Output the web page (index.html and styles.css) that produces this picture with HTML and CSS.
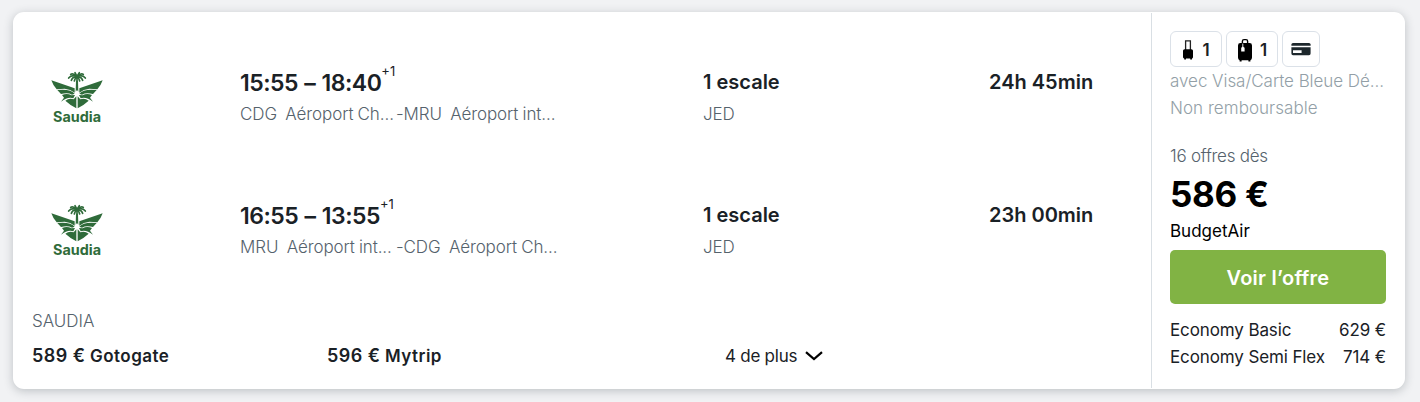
FILE: index.html
```html
<!DOCTYPE html>
<html lang="fr">

<head>
  <meta charset="UTF-8">
  <meta name="viewport" content="width=device-width, initial-scale=1.0">
  <title>Vols Paris - Maurice</title>
  <link rel="stylesheet" href="styles.css">
</head>

<body>
  <!-- Airline emblem, shared by both legs -->
  <svg class="defs" width="0" height="0">
    <symbol id="saudia" viewBox="0 0 225 225">
      <path d="M111 49L105 38M111 49L118 38M111 49Q99 38 92 43M111 49Q123 38 130 43M111 49Q94 43 86 54M111 49Q128 43 136 54M111 50Q99 49 94 61M111 50Q123 49 128 61M111 50Q105 54 103 63M111 50Q117 54 119 63M111 50V64" fill="none" stroke="#2f6b3a" stroke-width="5" stroke-linecap="round" />
      <g fill="#2f6b3a">
        <path d="M108 62H114L115 95L111 90L107 95Z" />
        <path d="M34 61L104 85V98Q92 88 74 86L50 88Q39 76 34 61Z" />
        <path d="M188 61L118 85V98Q130 88 148 86L172 88Q183 76 188 61Z" />
        <path d="M52 90Q92 86 104 101L96 104Q84 97 63 102Z" />
        <path d="M170 90Q130 86 118 101L126 104Q138 97 159 102Z" />
        <path d="M66 105Q82 99 94 106L105 105L100 115Q84 109 63 125L72 113Z" />
        <path d="M156 105Q140 99 128 106L117 105L122 115Q138 109 159 125L150 113Z" />
        <path d="M76 122Q88 113 101 118L109 109V145Q90 135 76 122Z" />
        <path d="M146 122Q134 113 121 118L113 109V145Q132 135 146 122Z" />
      </g>
    </symbol>
  </svg>

  <div class="card">
    <div class="flights">
      <div class="leg">
        <svg class="logo" viewBox="0 0 75 75">
          <use href="#saudia" width="75" height="75" />
          <text class="logo-text" x="13" y="62.4" textLength="48" lengthAdjust="spacingAndGlyphs">Saudia</text>
        </svg>
        <div class="times">
          <div class="hours"><span>15:55 – 18:40</span><sup>+1</sup></div>
          <div class="airports"><span class="from">CDG&nbsp; Aéroport Ch...</span><span>-MRU&nbsp; Aéroport int...</span></div>
        </div>
        <div class="stops">
          <div class="strong">1 escale</div>
          <div class="airports">JED</div>
        </div>
        <div class="strong duration">24h 45min</div>
      </div>

      <div class="leg">
        <svg class="logo" viewBox="0 0 75 75">
          <use href="#saudia" width="75" height="75" />
          <text class="logo-text" x="13" y="62.4" textLength="48" lengthAdjust="spacingAndGlyphs">Saudia</text>
        </svg>
        <div class="times">
          <div class="hours"><span>16:55 – 13:55</span><sup>+1</sup></div>
          <div class="airports"><span class="from">MRU&nbsp; Aéroport int...</span><span>-CDG&nbsp; Aéroport Ch...</span></div>
        </div>
        <div class="stops">
          <div class="strong">1 escale</div>
          <div class="airports">JED</div>
        </div>
        <div class="strong duration">23h 00min</div>
      </div>

      <div class="airline">SAUDIA</div>
      <div class="other-offers">
        <div class="offer"><span class="amount">589 €</span> Gotogate</div>
        <div class="offer"><span class="amount">596 €</span> Mytrip</div>
        <div class="more">
          <span>4 de plus</span>
          <svg width="18" height="10" viewBox="0 0 18 10"><path d="M1 1.2L9 8L17 1.2" fill="none" stroke="#000" stroke-width="2.2" /></svg>
        </div>
      </div>
    </div>

    <div class="price-panel">
      <div class="badges">
        <div class="badge">
          <svg width="12" height="22" viewBox="0 0 12 22">
            <path d="M3.6 11V1.8H8.4V11" fill="none" stroke="#222" stroke-width="1.3" />
            <path d="M2.6 10.3H9.4Q11 10.3 11 11.8V18Q11 19.2 10 19.4V20.6H8.2V19.6H4V20.6H2.2V19.4Q1 19.2 1 18V11.8Q1 10.3 2.6 10.3Z" />
          </svg>
          <span>1</span>
        </div>
        <div class="badge big">
          <svg width="16" height="24" viewBox="0 0 16 24">
            <path d="M5.4 6V3.2Q5.4 1.6 7 1.6H9Q10.6 1.6 10.6 3.2V6" fill="none" stroke="#000" stroke-width="1.4" />
            <path d="M3.4 5H12.6Q15 5 15 7.4V19.6Q15 22 13.4 22.2V23.4H11.4V22.3H4.6V23.4H2.6V22.2Q1 22 1 19.6V7.4Q1 5 3.4 5Z" />
            <path d="M5.8 5.6V9" stroke="#fff" stroke-width="0.9" />
            <path d="M4.2 9.8L5.8 8.4L7.6 9.8V13.6H4.2Z" fill="#fff" />
          </svg>
          <span>1</span>
        </div>
        <div class="badge card-badge">
          <svg width="20" height="13" viewBox="0 0 20 13">
            <path fill="#1d272c" d="M2 0H18Q19.6 0 19.6 1.6V2.8H0.4V1.6Q0.4 0 2 0Z" />
            <path fill="#1d272c" fill-rule="evenodd" d="M0.4 4.2H19.6V10.6Q19.6 12.3 18 12.3H2Q0.4 12.3 0.4 10.6ZM2 7.2V10H10.6V7.2Z" />
          </svg>
        </div>
      </div>
      <div class="notes">
        <div class="note visa">avec Visa/Carte Bleue Dé...</div>
        <div class="note">Non remboursable</div>
      </div>

      <div class="count">16 offres dès</div>
      <div class="price">586 €</div>
      <div class="provider">BudgetAir</div>
      <button class="cta">Voir l’offre</button>

      <div class="fare"><span>Economy Basic</span><span>629 €</span></div>
      <div class="fare"><span>Economy Semi Flex</span><span>714 €</span></div>
    </div>
  </div>
</body>

</html>
```
FILE: styles.css
```css
* {
  box-sizing: border-box;
}

body {
  margin: 0;
  padding: 12px 15px 13px 13px;
  height: 402px;
  overflow: hidden;
  background-color: #f1f2f4;
  font-family: Inter, "Liberation Sans", sans-serif;
  font-size: 17px;
  color: #1a2126;
}

.defs {
  display: block;
}

/* Result card */
.card {
  display: flex;
  height: 377px;
  background-color: #fff;
  border-radius: 11px;
  box-shadow: 0 2px 10px rgba(37, 46, 55, 0.25);
}

.flights {
  width: 1138px;
  padding: 48px 0 0 19px;
}

/* One leg of the trip */
.leg {
  display: grid;
  grid-template-columns: 200px 463px 286px 1fr;
  height: 133px;
  margin-left: 8px;
}

.logo {
  width: 75px;
  height: 75px;
}

.logo-text {
  font-family: Inter, sans-serif;
  font-size: 14px;
  font-weight: 700;
  fill: #2f6b3a;
}

.hours {
  display: flex;
  height: 40px;
  line-height: 46px;
  font-size: 23px;
  font-weight: 600;
  letter-spacing: -0.5px;
  word-spacing: 1px;
  white-space: nowrap;
}

.hours sup {
  font-size: 13px;
  font-weight: 400;
  line-height: 22px;
  letter-spacing: 0;
  vertical-align: top;
}

.airports {
  display: flex;
  line-height: 28px;
  font-weight: 300;
  letter-spacing: -0.1px;
  word-spacing: -0.5px;
  color: #55626c;
  white-space: nowrap;
}

.from {
  width: 156px;
}

.strong {
  height: 40px;
  line-height: 44px;
  font-size: 20px;
  font-weight: 600;
}

.airline {
  line-height: 26px;
  margin-top: -18px;
  font-weight: 300;
  color: #55626c;
}

.other-offers {
  display: grid;
  grid-template-columns: 295px 398px 1fr;
  margin-top: 9px;
  line-height: 26px;
}

.offer {
  font-weight: 600;
  letter-spacing: 0.45px;
}

.amount {
  font-size: 18px;
}

.more {
  display: flex;
  align-items: center;
  gap: 8px;
  letter-spacing: -0.25px;
}

/* Right column */
.price-panel {
  flex: 1;
  padding: 18px 19px 0 18px;
  border-left: 1px solid #d9dfe4;
  margin: 1px 0;
}

.badges {
  display: flex;
  gap: 4px;
}

.badge {
  display: flex;
  align-items: center;
  justify-content: center;
  gap: 8px;
  width: 52px;
  height: 36px;
  padding-top: 1px;
  border: 1px solid #dbe1e8;
  border-radius: 6px;
  font-weight: 600;
}

.big {
  gap: 7px;
}

.card-badge {
  width: 38px;
}

.notes {
  margin-top: 1px;
}

.note {
  line-height: 27px;
  font-weight: 300;
  letter-spacing: 0.05px;
  color: #939fa7;
  white-space: nowrap;
}

.visa {
  letter-spacing: -0.05px;
}

.count {
  margin-top: 21px;
  line-height: 27px;
  font-weight: 300;
  letter-spacing: -0.25px;
  color: #55626c;
}

.price {
  line-height: 48px;
  font-size: 35px;
  font-weight: 700;
  letter-spacing: -0.3px;
  color: #000;
}

.provider {
  line-height: 26px;
  color: #000;
}

.cta {
  display: block;
  width: 216px;
  height: 54px;
  margin: 6px 0 13px;
  padding: 1px 0 0;
  border: none;
  border-radius: 5px;
  background-color: #81b344;
  color: #fff;
  font-family: inherit;
  font-size: 20px;
  font-weight: 600;
  letter-spacing: 0.25px;
  cursor: pointer;
}

.fare {
  display: flex;
  justify-content: space-between;
  line-height: 27px;
  letter-spacing: -0.12px;
  white-space: nowrap;
}
```
